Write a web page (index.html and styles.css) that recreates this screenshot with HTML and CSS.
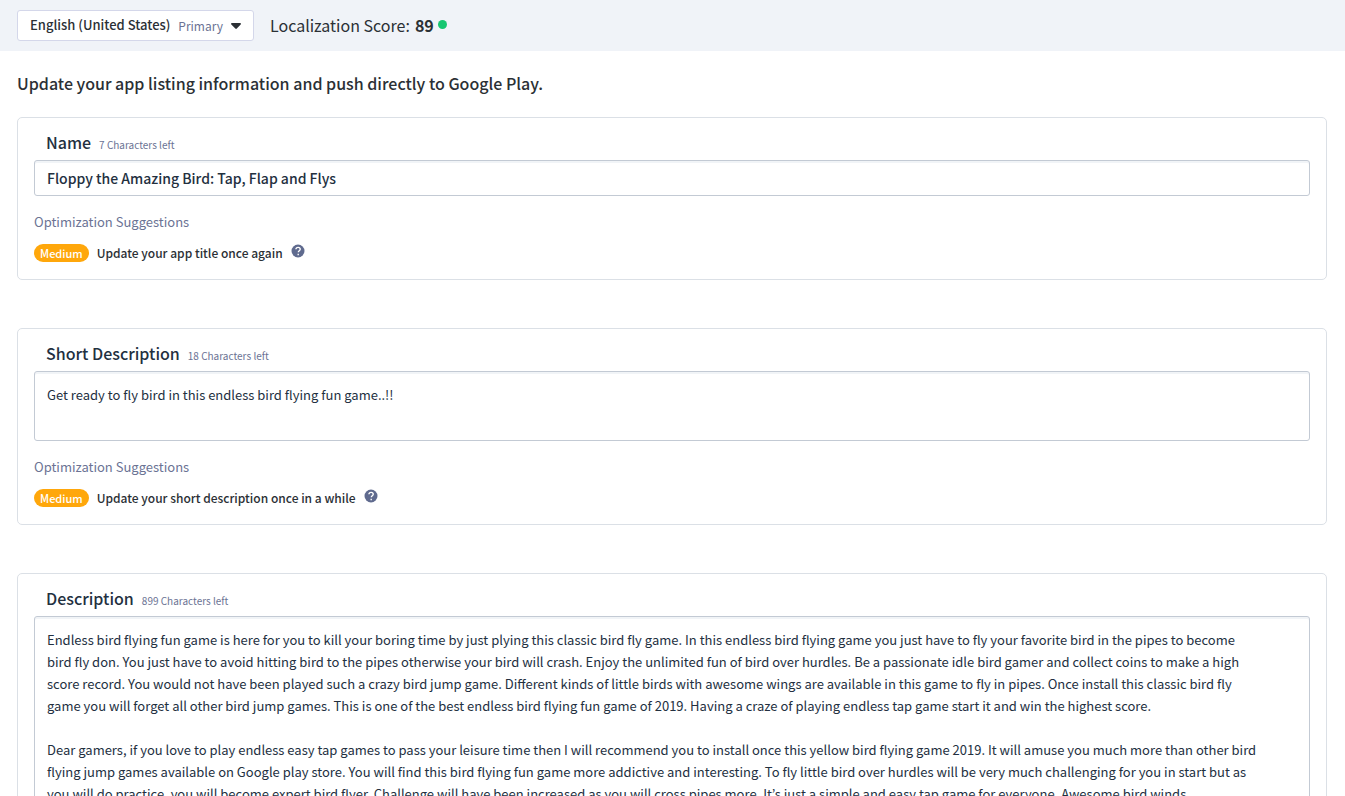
FILE: index.html
```html
<!DOCTYPE html>
<html lang="en">
<head>
  <meta charset="UTF-8">
  <title>App Listing</title>
  <link rel="stylesheet" href="styles.css">
</head>
<body>
  <header class="topbar">
    <div class="language">
      <select class="language-select" aria-label="Language">
        <option>English (United States)</option>
      </select>
      <span class="language-note">
        Primary
        <svg class="caret" viewBox="0 0 10 6" aria-hidden="true"><path d="M1 0h8c.9 0 1.300.9.700 1.500L5.800 5.600c-.4.4-1.100.4-1.500 0L.3 1.500C-.3.9.1 0 1 0z"/></svg>
      </span>
    </div>
    <div class="score">Localization Score: <strong>89</strong><span class="dot"></span></div>
  </header>

  <main class="content">
    <h1>Update your app listing information and push directly to Google Play.</h1>

    <section class="card">
      <div class="field-head">
        <label for="name">Name</label>
        <span class="chars-left">7 Characters left</span>
      </div>
      <input type="text" id="name" class="field field-name" value="Floppy the Amazing Bird: Tap, Flap and Flys">
      <h2>Optimization Suggestions</h2>
      <div class="suggestion">
        <span class="badge">Medium</span>
        <span>Update your app title once again</span>
        <button type="button" class="help" aria-label="Help">
          <svg viewBox="0 0 14 14"><circle cx="7" cy="7" r="6.500"/><path d="M4.900 5.300c.1-1.200 1-1.900 2.200-1.900s2.100.7 2.100 1.800c0 1.500-1.900 1.500-1.900 3"/><path d="M7.200 9.800v1.400"/></svg>
        </button>
      </div>
    </section>

    <section class="card">
      <div class="field-head">
        <label for="shortDescription">Short Description</label>
        <span class="chars-left">18 Characters left</span>
      </div>
      <textarea id="shortDescription" class="field" rows="2" spellcheck="false">Get ready to fly bird in this endless bird flying fun game..!!</textarea>
      <h2>Optimization Suggestions</h2>
      <div class="suggestion">
        <span class="badge">Medium</span>
        <span>Update your short description once in a while</span>
        <button type="button" class="help" aria-label="Help">
          <svg viewBox="0 0 14 14"><circle cx="7" cy="7" r="6.500"/><path d="M4.900 5.300c.1-1.200 1-1.900 2.200-1.900s2.100.7 2.100 1.800c0 1.500-1.900 1.500-1.900 3"/><path d="M7.200 9.800v1.400"/></svg>
        </button>
      </div>
    </section>

    <section class="card">
      <div class="field-head">
        <label for="description">Description</label>
        <span class="chars-left">899 Characters left</span>
      </div>
      <textarea id="description" class="field field-long" rows="14" spellcheck="false">Endless bird flying fun game is here for you to kill your boring time by just plying this classic bird fly game. In this endless bird flying game you just have to fly your favorite bird in the pipes to become bird fly don. You just have to avoid hitting bird to the pipes otherwise your bird will crash. Enjoy the unlimited fun of bird over hurdles. Be a passionate idle bird gamer and collect coins to make a high score record. You would not have been played such a crazy bird jump game. Different kinds of little birds with awesome wings are available in this game to fly in pipes. Once install this classic bird fly game you will forget all other bird jump games. This is one of the best endless bird flying fun game of 2019. Having a craze of playing endless tap game start it and win the highest score.

Dear gamers, if you love to play endless easy tap games to pass your leisure time then I will recommend you to install once this yellow bird flying game 2019. It will amuse you much more than other bird flying jump games available on Google play store. You will find this bird flying fun game more addictive and interesting. To fly little bird over hurdles will be very much challenging for you in start but as you will do practice, you will become expert bird flyer. Challenge will have been increased as you will cross pipes more. It’s just a simple and easy tap game for everyone. Awesome bird winds</textarea>
    </section>
  </main>
</body>
</html>
```
FILE: styles.css
```css
* {
  box-sizing: border-box;
}
body {
  margin: 0;
  background-color: #fff;
  color: #2b3035;
  font-family: "Noto Sans CJK KR", "Open Sans", sans-serif;
  font-size: 13px;
  line-height: 22px;
}
.topbar {
  display: flex;
  align-items: center;
  gap: 16px;
  padding: 10px 17px;
  background-color: #f0f3f8;
}
.language {
  display: grid;
  width: 237px;
  height: 31px;
}
.language-select,
.language-note {
  grid-area: 1 / 1;
}
.language-select {
  appearance: none;
  border: 1px solid #d4d7ea;
  border-radius: 3px;
  background-color: #fff;
  padding: 0 12px 2px;
  color: inherit;
  font-family: inherit;
  font-size: 13px;
  font-weight: 500;
}
.language-note {
  display: flex;
  align-items: center;
  gap: 8px;
  justify-self: end;
  padding-right: 13px;
  color: #6b7394;
  font-size: 12px;
  pointer-events: none;
}
.caret {
  width: 10px;
  height: 6px;
  fill: #2b3035;
}
.score {
  display: flex;
  align-items: center;
  padding-bottom: 2px;
  font-size: 16px;
}
.score strong {
  margin: 0 4px 0 5px;
}
.dot {
  width: 9px;
  height: 9px;
  border-radius: 50%;
  background-color: #17c671;
}
.content {
  padding: 21px 18px 48px 17px;
}
h1 {
  margin: 0 0 23px;
  font-size: 16px;
  font-weight: 500;
  line-height: 22px;
}
.card {
  margin-bottom: 48px;
  border: 1px solid #dbe0e6;
  border-radius: 5px;
  padding: 10px 16px 15px;
}
.field-head {
  display: flex;
  align-items: baseline;
  gap: 8px;
  padding: 0 12px 1px;
  line-height: 29px;
}
.field-head label {
  color: #23303f;
  font-size: 16px;
  font-weight: 500;
}
.chars-left {
  color: #6b7394;
  font-size: 10px;
}
.field {
  display: block;
  width: 100%;
  border: 1px solid #c3cad4;
  border-radius: 3px;
  padding: 12px;
  background-color: #fff;
  box-shadow: inset 0 2px 0 #f1f4f7;
  color: #23303f;
  font-family: inherit;
  font-size: 13px;
  line-height: 22px;
  resize: none;
}
.field-name {
  height: 36px;
  padding: 0 12px;
  font-size: 14px;
  font-weight: 500;
}
.field-long {
  padding-right: 48px;
}
h2 {
  margin: 16px 0 10px;
  color: #6b7394;
  font-size: 13px;
  font-weight: 400;
  line-height: 20px;
}
.suggestion {
  display: flex;
  align-items: center;
  gap: 8px;
  font-size: 12px;
  font-weight: 500;
}
.badge {
  border-radius: 9px;
  padding: 0 6px;
  background-color: #ffa70b;
  color: #fff;
  font-size: 11px;
  line-height: 18px;
}
.help {
  margin-bottom: 4px;
  border: 0;
  padding: 0;
  background: none;
  line-height: 0;
  cursor: pointer;
}
.help svg {
  width: 14px;
  height: 14px;
  fill: none;
  stroke: #fff;
  stroke-width: 1.4;
}
.help circle {
  fill: #5f6a8e;
  stroke: none;
}
```
